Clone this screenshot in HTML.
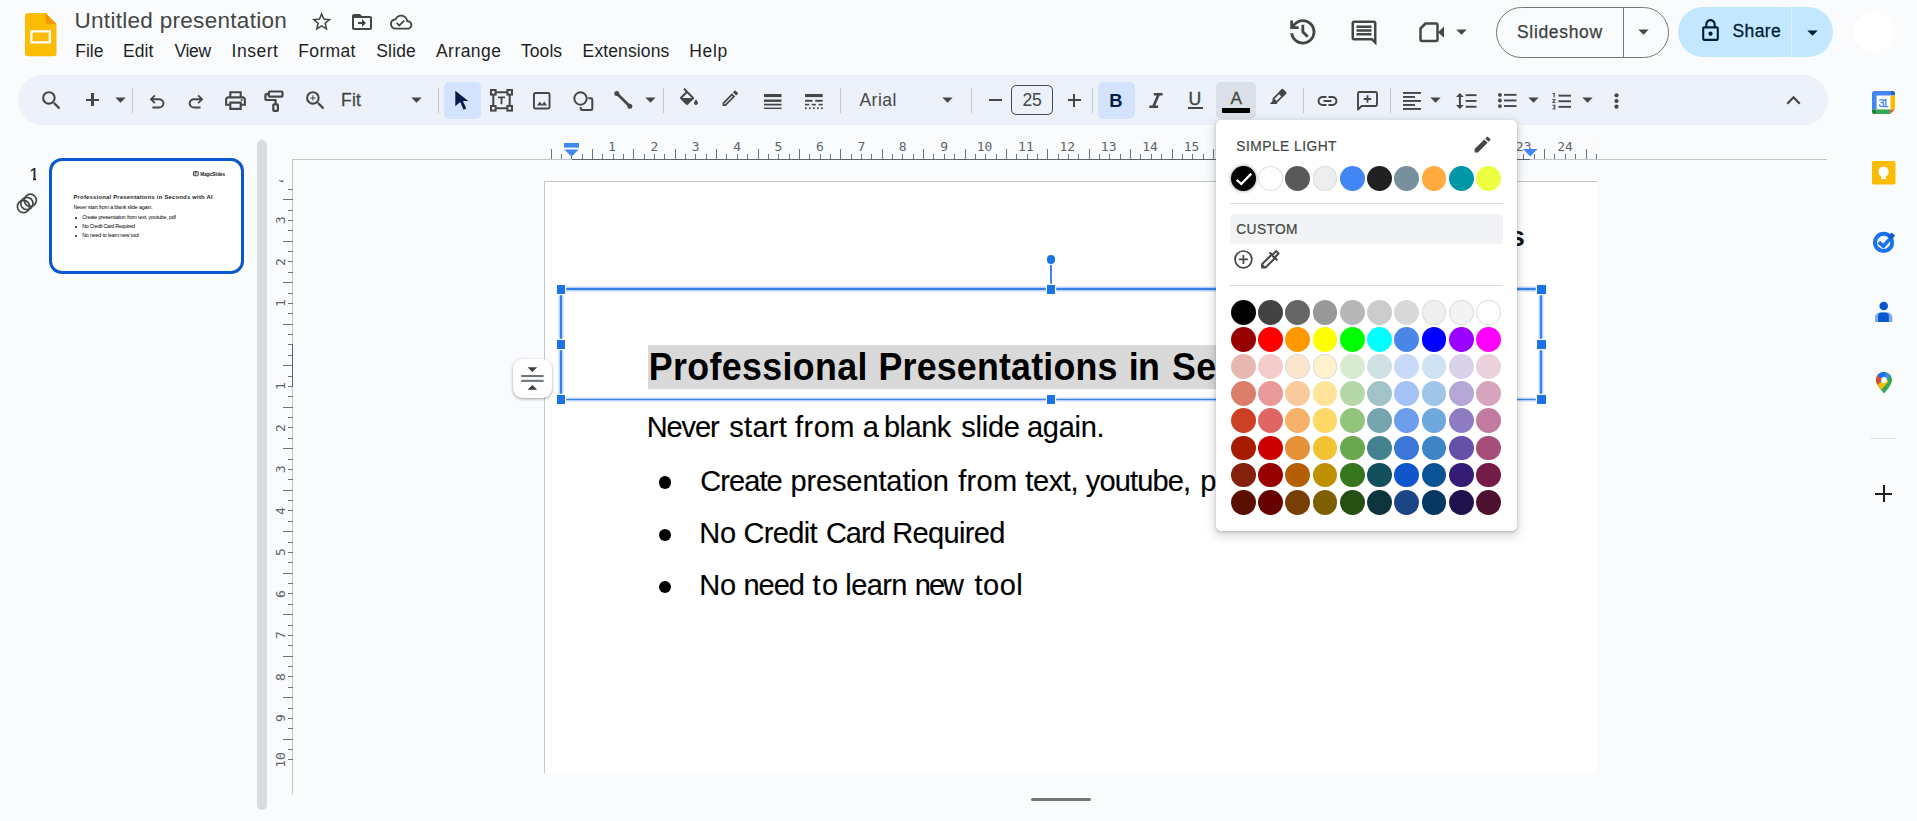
<!DOCTYPE html>
<html><head><meta charset="utf-8"><title>Untitled presentation - Google Slides</title>
<style>
html,body{margin:0;padding:0}
body{width:1917px;height:821px;position:relative;overflow:hidden;background:#f9fbfd;font-family:"Liberation Sans",sans-serif}
svg{display:block;overflow:visible}
</style></head><body>
<svg style="position:absolute;left:25px;top:13.3px" width="31.5" height="43.2" viewBox="0 0 31.5 43.2">
<path d="M3 0H20.5L31.5 11V40.2a3 3 0 0 1-3 3H3a3 3 0 0 1-3-3V3a3 3 0 0 1 3-3z" fill="#fbbc04"/>
<path d="M20.5 0L31.5 11H23.5a3 3 0 0 1-3-3z" fill="#f29900"/>
<path d="M5.3 17.2H26V30.5H5.3zM7.6 19.5V28.2H23.7V19.5z" fill="#fff" fill-rule="evenodd"/>
</svg>
<span style="position:absolute;left:74.50px;top:7.70px;white-space:pre;font-family:'Liberation Sans',sans-serif;font-size:22.5px;font-weight:400;font-style:normal;color:#444746;letter-spacing:0.297px;line-height:normal;">Untitled presentation</span>
<svg style="position:absolute;left:310px;top:9.75px" width="23.3" height="23.3" viewBox="0 0 24 24" fill="#444746" ><path d="M12 17.27 18.18 21l-1.64-7.03L22 9.24l-7.19-.61L12 2 9.19 8.63 2 9.24l5.46 4.73L5.82 21zM12 15.4l-3.76 2.27 1-4.28-3.32-2.88 4.38-.38L12 6.1l1.71 4.04 4.38.38-3.32 2.88 1 4.28z" fill-rule="evenodd"/></svg>
<svg style="position:absolute;left:349.6px;top:9.9px" width="24" height="24" viewBox="0 0 24 24" fill="#444746" ><path d="M20 6h-8l-2-2H4c-1.1 0-2 .9-2 2v12c0 1.1.9 2 2 2h16c1.1 0 2-.9 2-2V8c0-1.1-.9-2-2-2zm0 12H4V8h16v10zm-8.01-1L16 13l-4.010-4v3H8v2h3.990z" fill-rule="evenodd"/></svg>
<svg style="position:absolute;left:390px;top:10.5px" width="22.3" height="22.3" viewBox="0 0 24 24" fill="#444746" ><path d="M19.35 10.04C18.67 6.59 15.64 4 12 4 9.11 4 6.6 5.64 5.35 8.04 2.34 8.36 0 10.91 0 14c0 3.31 2.69 6 6 6h13c2.76 0 5-2.24 5-5 0-2.64-2.05-4.78-4.65-4.96zM19 18H6c-2.21 0-4-1.79-4-4 0-2.05 1.53-3.76 3.56-3.97l1.07-.11.5-.95C8.08 7.140 9.94 6 12 6c2.620 0 4.880 1.860 5.390 4.430l.3 1.5 1.530.11c1.560.1 2.780 1.410 2.780 2.960 0 1.650-1.350 3-3 3zm-9-3.820l-2.090-2.090L6.500 13.500 10 17l6.010-6.010-1.410-1.410z" fill-rule="evenodd"/></svg>
<span style="position:absolute;left:75.20px;top:40.80px;white-space:pre;font-family:'Liberation Sans',sans-serif;font-size:17.5px;font-weight:400;font-style:normal;color:#1f1f1f;letter-spacing:0.045px;line-height:normal;">File</span>
<span style="position:absolute;left:123.10px;top:40.80px;white-space:pre;font-family:'Liberation Sans',sans-serif;font-size:17.5px;font-weight:400;font-style:normal;color:#1f1f1f;letter-spacing:0.002px;line-height:normal;">Edit</span>
<span style="position:absolute;left:174.60px;top:40.80px;white-space:pre;font-family:'Liberation Sans',sans-serif;font-size:17.5px;font-weight:400;font-style:normal;color:#1f1f1f;letter-spacing:-0.359px;line-height:normal;">View</span>
<span style="position:absolute;left:231.60px;top:40.80px;white-space:pre;font-family:'Liberation Sans',sans-serif;font-size:17.5px;font-weight:400;font-style:normal;color:#1f1f1f;letter-spacing:0.499px;line-height:normal;">Insert</span>
<span style="position:absolute;left:298.30px;top:40.80px;white-space:pre;font-family:'Liberation Sans',sans-serif;font-size:17.5px;font-weight:400;font-style:normal;color:#1f1f1f;letter-spacing:0.348px;line-height:normal;">Format</span>
<span style="position:absolute;left:376.30px;top:40.80px;white-space:pre;font-family:'Liberation Sans',sans-serif;font-size:17.5px;font-weight:400;font-style:normal;color:#1f1f1f;letter-spacing:0.155px;line-height:normal;">Slide</span>
<span style="position:absolute;left:436.00px;top:40.80px;white-space:pre;font-family:'Liberation Sans',sans-serif;font-size:17.5px;font-weight:400;font-style:normal;color:#1f1f1f;letter-spacing:0.446px;line-height:normal;">Arrange</span>
<span style="position:absolute;left:521.10px;top:40.80px;white-space:pre;font-family:'Liberation Sans',sans-serif;font-size:17.5px;font-weight:400;font-style:normal;color:#1f1f1f;letter-spacing:0.024px;line-height:normal;">Tools</span>
<span style="position:absolute;left:582.60px;top:40.80px;white-space:pre;font-family:'Liberation Sans',sans-serif;font-size:17.5px;font-weight:400;font-style:normal;color:#1f1f1f;letter-spacing:0.127px;line-height:normal;">Extensions</span>
<span style="position:absolute;left:689.30px;top:40.80px;white-space:pre;font-family:'Liberation Sans',sans-serif;font-size:17.5px;font-weight:400;font-style:normal;color:#1f1f1f;letter-spacing:0.614px;line-height:normal;">Help</span>
<svg style="position:absolute;left:1285.8px;top:14.6px" width="33.7" height="33.7" viewBox="0 0 24 24" fill="#444746" ><path d="M12 21q-3.450 0-6.012-2.287T3.050 13H5.100q.350 2.600 2.313 4.300T12 19q2.925 0 4.963-2.037T19 12q0-2.925-2.037-4.963T12 5q-1.725 0-3.225.8T6.250 8H9v2H3V4h2v2.350q1.275-1.600 3.113-2.475T12 3q1.875 0 3.513.712t2.850 1.925q1.212 1.213 1.925 2.850T21 12q0 1.875-.712 3.513t-1.925 2.850q-1.213 1.212-2.850 1.925T12 21zm2.800-4.800L11 12.400V7h2v4.600l3.200 3.200z"/></svg>
<svg style="position:absolute;left:1349px;top:17.5px" width="30" height="30" viewBox="0 0 24 24" fill="#444746" ><path d="M21.990 4c0-1.100-.89-2-1.990-2H4c-1.100 0-2 .9-2 2v12c0 1.100.9 2 2 2h14l4 4-.01-18zM20 4v13.170L18.830 16H4V4h16zM6 12h12v2H6zm0-3h12v2H6zm0-3h12v2H6z" fill-rule="evenodd"/></svg>
<svg style="position:absolute;left:1419px;top:22px" width="26" height="21" viewBox="0 0 26 21" fill="none" stroke="#444746" stroke-width="2.5" stroke-linejoin="round"><path d="M6.500 1.500H17a1.500 1.500 0 0 1 1.500 1.500V17.500a1.500 1.500 0 0 1-1.500 1.500H3a1.500 1.500 0 0 1-1.500-1.500V6.500z"/><path d="M19 10.200 25 4.500V15.800z" fill="#444746" stroke="none"/></svg>
<svg style="position:absolute;left:1449.1px;top:18.8px" width="25" height="25" viewBox="0 0 24 24" fill="#444746" ><path d="M7 10l5 5 5-5z"/></svg>
<div style="position:absolute;left:1496px;top:7px;width:170.5px;height:48.5px;border:1px solid #747775;border-radius:26px;box-sizing:content-box"></div>
<div style="position:absolute;left:1623.3px;top:7.5px;width:1px;height:50px;background:#747775"></div>
<span style="position:absolute;left:1517.00px;top:22.30px;white-space:pre;font-family:'Liberation Sans',sans-serif;font-size:17.5px;font-weight:400;font-style:normal;color:#3c3f3e;letter-spacing:0.671px;line-height:normal;-webkit-text-stroke:0.25px #3c3f3e;">Slideshow</span>
<svg style="position:absolute;left:1631.4px;top:18.8px" width="25" height="25" viewBox="0 0 24 24" fill="#444746" ><path d="M7 10l5 5 5-5z"/></svg>
<div style="position:absolute;left:1678px;top:7px;width:155px;height:50px;background:#c2e7ff;border-radius:25px"></div>
<div style="position:absolute;left:1791.2px;top:7px;width:1.2px;height:50px;background:#e3f2fd"></div>
<svg style="position:absolute;left:1698px;top:17.800px" width="25" height="25" viewBox="0 0 24 24" fill="#001d35"><path d="M18 8h-1V6c0-2.760-2.240-5-5-5S7 3.240 7 6v2H6c-1.100 0-2 .9-2 2v10c0 1.100.9 2 2 2h12c1.100 0 2-.9 2-2V10c0-1.100-.9-2-2-2zM9 6c0-1.660 1.340-3 3-3s3 1.340 3 3v2H9V6zm9 14H6V10h12v10zm-6-3c1.100 0 2-.9 2-2s-.9-2-2-2-2 .9-2 2 .9 2 2 2z" fill-rule="evenodd"/></svg>
<span style="position:absolute;left:1732.50px;top:21.00px;white-space:pre;font-family:'Liberation Sans',sans-serif;font-size:17.5px;font-weight:400;font-style:normal;color:#001d35;letter-spacing:0.384px;line-height:normal;-webkit-text-stroke:0.3px #001d35;">Share</span>
<svg style="position:absolute;left:1799.5px;top:19.5px" width="25" height="25" viewBox="0 0 24 24" fill="#001d35" ><path d="M7 10l5 5 5-5z"/></svg>
<div style="position:absolute;left:1853px;top:12px;width:40px;height:40px;background:#fff;border-radius:50%"></div>
<div style="position:absolute;left:18px;top:75px;width:1810px;height:50px;background:#edf2fa;border-radius:25px"></div>
<svg style="position:absolute;left:38.6px;top:88.1px" width="25" height="25" viewBox="0 0 24 24" fill="#444746" ><path d="M15.5 14h-.79l-.28-.27A6.471 6.471 0 0 0 16 9.500 6.500 6.500 0 1 0 9.500 16c1.610 0 3.090-.59 4.230-1.570l.27.28v.79l5 4.990L20.490 19zm-6 0C7.010 14 5 11.990 5 9.500S7.010 5 9.500 5 14 7.010 14 9.500 11.990 14 9.500 14z"/></svg>
<div style="position:absolute;left:86.2px;top:98.55px;width:13px;height:2.5px;background:#444746"></div>
<div style="position:absolute;left:91.45px;top:93.3px;width:2.5px;height:13px;background:#444746"></div>
<svg style="position:absolute;left:107.5px;top:87.3px" width="25" height="25" viewBox="0 0 24 24" fill="#444746" ><path d="M7 10l5 5 5-5z"/></svg>
<div style="position:absolute;left:131.8px;top:88px;width:1px;height:25px;background:#c7c7c7"></div>
<svg style="position:absolute;left:145.7px;top:91.1px" width="22" height="22" viewBox="0 0 24 24" fill="#444746" ><path d="M7 19v-2h7.100q1.575 0 2.738-1T18 13.500q0-1.500-1.163-2.500T14.100 10H7.800l2.600 2.600L9 14 4 9l5-5 1.400 1.400L7.800 8h6.300q2.425 0 4.163 1.575T20 13.500q0 2.350-1.738 3.925T14.100 19z"/></svg>
<svg style="position:absolute;left:184.9px;top:91.1px" width="22" height="22" viewBox="0 0 24 24" fill="#444746" ><path d="M9.900 19q-2.425 0-4.163-1.575T4 13.500q0-2.350 1.737-3.925T9.900 8h6.300l-2.600-2.600L15 4l5 5-5 5-1.400-1.400 2.600-2.600H9.900q-1.575 0-2.738 1T6 13.500Q6 15 7.162 16T9.900 17H17v2z"/></svg>
<svg style="position:absolute;left:223px;top:88.3px" width="25" height="25" viewBox="0 0 24 24" fill="#444746" ><path d="M16 8V5H8v3H6V3h12v5zM18 12.500q.425 0 .712-.288T19 11.500q0-.425-.288-.712T18 10.500q-.425 0-.712.288T17 11.500q0 .425.288.712T18 12.500zM16 19v-4H8v4zm2 2H6v-4H2v-6q0-1.275.875-2.137T5 8h14q1.275 0 2.138.863T22 11v6h-4zm2-6v-4q0-.425-.288-.712T19 10H5q-.425 0-.712.288T4 11v4h2v-2h12v2z" fill-rule="evenodd"/></svg>
<svg style="position:absolute;left:263px;top:89px" width="22" height="25" viewBox="0 0 22 25" fill="none" stroke="#444746" stroke-width="2.200" stroke-linejoin="round"><rect x="5.800" y="2.500" width="13.700" height="5.200" rx="1"/><path d="M5.800 5.200H3.400a1 1 0 0 0-1 1V10a1 1 0 0 0 1 1H12.600V15"/><rect x="10.300" y="15.300" width="4.600" height="6.600" rx="0.800"/></svg>
<svg style="position:absolute;left:302.5px;top:88.3px" width="25" height="25" viewBox="0 0 24 24" fill="#444746" ><path d="M15.500 14h-.79l-.28-.27A6.471 6.471 0 0 0 16 9.500 6.500 6.500 0 1 0 9.500 16c1.610 0 3.090-.59 4.230-1.570l.27.28v.79l5 4.990L20.490 19zm-6 0C7.010 14 5 11.990 5 9.500S7.010 5 9.500 5 14 7.010 14 9.500 11.990 14 9.500 14zm.5-7H9v2H7v1h2v2h1v-2h2V9h-2z"/></svg>
<span style="position:absolute;left:341.00px;top:89.90px;white-space:pre;font-family:'Liberation Sans',sans-serif;font-size:17.5px;font-weight:400;font-style:normal;color:#444746;letter-spacing:0.211px;line-height:normal;-webkit-text-stroke:0.3px #444746;">Fit</span>
<svg style="position:absolute;left:403.5px;top:87.3px" width="25" height="25" viewBox="0 0 24 24" fill="#444746" ><path d="M7 10l5 5 5-5z"/></svg>
<div style="position:absolute;left:437.5px;top:88px;width:1px;height:25px;background:#c7c7c7"></div>
<div style="position:absolute;left:443.5px;top:82px;width:37.5px;height:37px;background:#d3e3fd;border-radius:5px"></div>
<svg style="position:absolute;left:454px;top:90px" width="16" height="22" viewBox="0 0 16 22" fill="#041e49"><path d="M1.300 0.800 14.300 10.900H8.900L12.300 18.600 9.600 19.800 6.200 12 1.300 16.200z"/></svg>
<svg style="position:absolute;left:490px;top:89.400px" width="23" height="22.600" viewBox="0 0 23 22.600" fill="none" stroke="#444746" stroke-width="2"><path d="M5.600 3.300H17.400M5.600 19.300H17.400M3.300 5.600V17M19.700 5.600V17"/><rect x="1" y="1" width="4.600" height="4.600"/><rect x="17.400" y="1" width="4.600" height="4.600"/><rect x="1" y="17" width="4.600" height="4.600"/><rect x="17.400" y="17" width="4.600" height="4.600"/><path d="M8 8.300H15M11.500 8.300V15.300" stroke-width="1.800"/></svg>
<svg style="position:absolute;left:532.500px;top:91.900px" width="17.500" height="17.500" viewBox="0 0 17.500 17.500" fill="none" stroke="#444746" stroke-width="1.900"><rect x="0.950" y="0.950" width="15.600" height="15.600" rx="1.500"/><path d="M3.800 13.600 6.900 9.800 9.100 12.400 11.300 9.600 14 13.600z" fill="#444746" stroke="none"/></svg>
<svg style="position:absolute;left:573px;top:90.600px" width="21" height="20.500" viewBox="0 0 21 20.500" fill="none" stroke="#444746" stroke-width="2"><circle cx="7.500" cy="7.500" r="6.200"/><path d="M15.300 7.300H17.800a1.500 1.500 0 0 1 1.500 1.500V17.500a1.500 1.500 0 0 1-1.500 1.500H9.300a1.500 1.500 0 0 1-1.500-1.500V16"/></svg>
<svg style="position:absolute;left:614px;top:91px" width="19" height="18" viewBox="0 0 19 18" fill="#444746" stroke="#444746"><path d="M2.800 2.600 15.800 15.200" stroke-width="2.800"/><circle cx="2.800" cy="2.600" r="2.500" stroke="none"/><circle cx="15.800" cy="15.200" r="2.500" stroke="none"/></svg>
<svg style="position:absolute;left:638.1px;top:87.3px" width="25" height="25" viewBox="0 0 24 24" fill="#444746" ><path d="M7 10l5 5 5-5z"/></svg>
<div style="position:absolute;left:662.7px;top:88px;width:1px;height:25px;background:#c7c7c7"></div>
<svg style="position:absolute;left:676.5px;top:88.2px" width="24" height="24" viewBox="0 0 24 24" fill="#444746" ><path d="M16.560 8.940 7.620 0 6.210 1.410l2.380 2.380-5.150 5.150a1.490 1.490 0 0 0 0 2.120l5.500 5.500c.29.29.68.44 1.060.44s.77-.15 1.060-.44l5.500-5.500c.59-.58.59-1.530 0-2.120zM5.210 10 10 5.210 14.790 10zM19 11.500s-2 2.170-2 3.500c0 1.100.9 2 2 2s2-.9 2-2c0-1.330-2-3.500-2-3.500z"/></svg>
<svg style="position:absolute;left:719.9px;top:88.4px" width="20.5" height="20.5" viewBox="0 0 24 24" fill="#444746" ><path d="M3 17.250V21h3.750L17.810 9.940l-3.750-3.750zM5.920 19H5v-.92l9.060-9.060.92.920zM20.710 5.630l-2.340-2.340a1 1 0 0 0-1.410 0l-1.830 1.830 3.750 3.750 1.830-1.830a1 1 0 0 0 0-1.410z" fill-rule="evenodd"/></svg>
<svg style="position:absolute;left:763.700px;top:93.500px" width="17.500" height="15.500" viewBox="0 0 17.500 15.500" fill="#444746"><rect x="0" y="0" width="17.500" height="3.100"/><rect x="0" y="5.500" width="17.500" height="2.400"/><rect x="0" y="9.700" width="17.500" height="1.800"/><rect x="0" y="13.600" width="17.500" height="1.400"/></svg>
<svg style="position:absolute;left:805px;top:93.500px" width="17.700" height="15.500" viewBox="0 0 17.700 15.500" fill="#444746"><rect x="0" y="0" width="17.700" height="3.100"/><rect x="0" y="5.800" width="7.500" height="1.900"/><rect x="10.200" y="5.800" width="7.500" height="1.900"/><rect x="0" y="9.800" width="4.200" height="1.600"/><rect x="6.700" y="9.800" width="4.200" height="1.600"/><rect x="13.500" y="9.800" width="4.200" height="1.600"/><rect x="0" y="13.400" width="1.700" height="1.700"/><rect x="4" y="13.400" width="1.700" height="1.700"/><rect x="8" y="13.400" width="1.700" height="1.700"/><rect x="12" y="13.400" width="1.700" height="1.700"/><rect x="16" y="13.400" width="1.700" height="1.700"/></svg>
<div style="position:absolute;left:839.7px;top:88px;width:1px;height:25px;background:#c7c7c7"></div>
<span style="position:absolute;left:859.40px;top:89.90px;white-space:pre;font-family:'Liberation Sans',sans-serif;font-size:17.5px;font-weight:400;font-style:normal;color:#444746;letter-spacing:0.520px;line-height:normal;">Arial</span>
<svg style="position:absolute;left:935.3px;top:86.5px" width="25" height="25" viewBox="0 0 24 24" fill="#444746" ><path d="M7 10l5 5 5-5z"/></svg>
<div style="position:absolute;left:970.9px;top:88px;width:1px;height:25px;background:#c7c7c7"></div>
<div style="position:absolute;left:988.5px;top:99.2px;width:13px;height:1.7px;background:#444746"></div>
<div style="position:absolute;left:1011px;top:85px;width:40px;height:28px;border:1px solid #444746;border-radius:5px;box-sizing:content-box"></div>
<span style="position:absolute;left:1022.50px;top:90.20px;white-space:pre;font-family:'Liberation Sans',sans-serif;font-size:17.5px;font-weight:400;font-style:normal;color:#444746;letter-spacing:-0.233px;line-height:normal;">25</span>
<div style="position:absolute;left:1067.7px;top:99.2px;width:13px;height:1.7px;background:#444746"></div>
<div style="position:absolute;left:1073.3px;top:93.6px;width:1.7px;height:13px;background:#444746"></div>
<div style="position:absolute;left:1091.8px;top:88px;width:1px;height:25px;background:#c7c7c7"></div>
<div style="position:absolute;left:1097.8px;top:82px;width:37px;height:37px;background:#d3e3fd;border-radius:5px"></div>
<span style="position:absolute;left:1109.20px;top:89.90px;white-space:pre;font-family:'Liberation Sans',sans-serif;font-size:18.3px;font-weight:700;font-style:normal;color:#041e49;letter-spacing:0.000px;line-height:normal;">B</span>
<svg style="position:absolute;left:1148.500px;top:92.800px" width="14" height="15" viewBox="0 0 14 15" fill="#444746"><path d="M4.800 0H13.600V2.500H10.600L6.300 12.500H9.100V15H0.300V12.500H3.400L7.700 2.500H4.800z"/></svg>
<span style="position:absolute;left:1188.40px;top:88.60px;white-space:pre;font-family:'Liberation Sans',sans-serif;font-size:17.6px;font-weight:400;font-style:normal;color:#444746;letter-spacing:0.000px;line-height:normal;-webkit-text-stroke:0.4px #444746;">U</span>
<div style="position:absolute;left:1188px;top:107.2px;width:14.8px;height:2px;background:#444746"></div>
<div style="position:absolute;left:1216px;top:82px;width:39.6px;height:37px;background:#dadfe8;border-radius:5px"></div>
<span style="position:absolute;left:1230.60px;top:87.90px;white-space:pre;font-family:'Liberation Sans',sans-serif;font-size:17.2px;font-weight:400;font-style:normal;color:#444746;letter-spacing:0.000px;line-height:normal;-webkit-text-stroke:0.3px #444746;">A</span>
<div style="position:absolute;left:1222px;top:107.9px;width:28px;height:5px;background:#000"></div>
<svg style="position:absolute;left:1255px;top:80px" width="90" height="40" viewBox="0 0 90 40"><g transform="translate(19.300,21.100) rotate(-45.100)"><rect x="0.850" y="-2.300" width="12.900" height="4.600" rx="0.400" fill="none" stroke="#444746" stroke-width="1.700"/><rect x="8.300" y="-3.150" width="6.400" height="6.300" rx="1.100" fill="#444746"/></g><path d="M14.800 24H21.500L22.300 23.200 17.400 19.200 17.400 21.300z" fill="#444746"/></svg>
<div style="position:absolute;left:1302.5px;top:88px;width:1px;height:25px;background:#c7c7c7"></div>
<svg style="position:absolute;left:1312px;top:85.5px" width="30" height="30" viewBox="0 0 24 24" fill="#444746" ><path d="M3.900 12c0-1.710 1.390-3.100 3.100-3.100h4V7H7c-2.760 0-5 2.240-5 5s2.240 5 5 5h4v-1.900H7c-1.710 0-3.100-1.390-3.100-3.100zM8 13h8v-2H8zm9-6h-4v1.900h4c1.710 0 3.100 1.390 3.100 3.100s-1.390 3.100-3.100 3.100h-4V17h4c2.760 0 5-2.240 5-5s-2.240-5-5-5z" transform="translate(12.400 12) scale(0.79) translate(-12 -12)"/></svg>
<svg style="position:absolute;left:1357px;top:90.700px" width="21" height="20" viewBox="0 0 21 20" fill="none" stroke="#444746" stroke-width="1.900" stroke-linejoin="round"><path d="M1 18.600V2.400a1.400 1.400 0 0 1 1.400-1.400H18.600a1.400 1.400 0 0 1 1.400 1.400V13.600a1.400 1.400 0 0 1-1.400 1.400H4.600z"/><path d="M10.500 4.300V11.700M6.800 8H14.200" stroke-width="1.800"/></svg>
<div style="position:absolute;left:1389.9px;top:88px;width:1px;height:25px;background:#c7c7c7"></div>
<svg style="position:absolute;left:1403.400px;top:92.200px" width="18" height="18" viewBox="0 0 18 18" fill="#444746"><rect y="0" width="18" height="1.900"/><rect y="4" width="12" height="1.900"/><rect y="8" width="18" height="1.900"/><rect y="12" width="12" height="1.900"/><rect y="16" width="18" height="1.900"/></svg>
<svg style="position:absolute;left:1422.5px;top:87.3px" width="25" height="25" viewBox="0 0 24 24" fill="#444746" ><path d="M7 10l5 5 5-5z"/></svg>
<svg style="position:absolute;left:1456px;top:93px" width="21" height="16" viewBox="0 0 21 16" fill="#444746"><rect x="9.700" y="1.200" width="10.800" height="1.900"/><rect x="9.700" y="7" width="10.800" height="1.900"/><rect x="9.700" y="12.800" width="10.800" height="1.900"/><path d="M3.900 0 7.800 4H4.900V12H7.800L3.900 16 0 12H2.900V4H0z"/></svg>
<svg style="position:absolute;left:1498.400px;top:93.200px" width="18.500" height="15" viewBox="0 0 18.500 15" fill="#444746"><circle cx="1.900" cy="1.900" r="1.900"/><circle cx="1.900" cy="7.500" r="1.900"/><circle cx="1.900" cy="13.100" r="1.900"/><rect x="6" y="0.900" width="12.500" height="1.900"/><rect x="6" y="6.500" width="12.500" height="1.900"/><rect x="6" y="12.100" width="12.500" height="1.900"/></svg>
<svg style="position:absolute;left:1520.8px;top:87.3px" width="25" height="25" viewBox="0 0 24 24" fill="#444746" ><path d="M7 10l5 5 5-5z"/></svg>
<svg style="position:absolute;left:1552px;top:92.500px" width="19" height="17" viewBox="0 0 19 17" fill="#444746"><rect x="6.500" y="1.700" width="12.500" height="1.900"/><rect x="6.500" y="7.300" width="12.500" height="1.900"/><rect x="6.500" y="12.900" width="12.500" height="1.900"/><path d="M0.600 0H2.700V4.600H1.600V1H0.600zM0.400 6H3.400V7L1.700 9H3.400V10H0.400V9L2.100 7H0.400zM0.400 11.800H3.400V16.400H0.400V15.400H2.300V14.600H1.200V13.700H2.300V12.800H0.400z"/></svg>
<svg style="position:absolute;left:1574.8px;top:87.3px" width="25" height="25" viewBox="0 0 24 24" fill="#444746" ><path d="M7 10l5 5 5-5z"/></svg>
<svg style="position:absolute;left:1613.700px;top:92.800px" width="5" height="16" viewBox="0 0 5 16" fill="#444746"><circle cx="2.500" cy="2.300" r="2.100"/><circle cx="2.500" cy="8" r="2.100"/><circle cx="2.500" cy="13.700" r="2.100"/></svg>
<svg style="position:absolute;left:1786px;top:95px" width="15" height="10" viewBox="0 0 15 10" fill="none" stroke="#444746" stroke-width="2.200"><path d="M1.300 8.700 7.500 2.300 13.700 8.700"/></svg>
<span style="position:absolute;left:29.40px;top:164.80px;white-space:pre;font-family:'Liberation Sans',sans-serif;font-size:16.6px;font-weight:400;font-style:normal;color:#1f1f1f;letter-spacing:0.000px;line-height:normal;-webkit-text-stroke:0.25px #1f1f1f;">1</span>
<div style="position:absolute;left:28.5px;top:178px;width:4.7px;height:2.6px;background:#f9fbfd"></div>
<div style="position:absolute;left:35.8px;top:178px;width:4px;height:2.6px;background:#f9fbfd"></div>
<svg style="position:absolute;left:16px;top:193px" width="22" height="21" viewBox="0 0 22 21" fill="none" stroke="#444746" stroke-width="1.700"><circle cx="14.300" cy="7.300" r="6.100"/><circle cx="10.900" cy="10.500" r="6.100"/><circle cx="7.500" cy="13.500" r="6.100"/></svg>
<div style="position:absolute;left:49px;top:158.3px;width:189.4px;height:109.4px;border:3px solid #0b57d0;border-radius:13px;background:#fff;box-sizing:content-box"></div>
<span style="position:absolute;left:200.30px;top:171.90px;white-space:pre;font-family:'Liberation Sans',sans-serif;font-size:4.6px;font-weight:700;font-style:normal;color:#222;letter-spacing:-0.190px;line-height:normal;">MagicSlides</span>
<svg style="position:absolute;left:192.700px;top:171.300px" width="5.700" height="5.200" viewBox="0 0 5.700 5.200" fill="none" stroke="#222" stroke-width="0.900"><rect x="0.450" y="0.450" width="4.800" height="4.300" rx="0.800"/><path d="M1.500 1.900H4.200M1.500 3.200H3"/></svg>
<span style="position:absolute;left:73.45px;top:194.10px;white-space:pre;font-family:'Liberation Sans',sans-serif;font-size:5.8px;font-weight:700;font-style:normal;color:#1a1a1a;letter-spacing:0.261px;line-height:normal;">Professional Presentations in Seconds with AI</span>
<span style="position:absolute;left:73.40px;top:204.00px;white-space:pre;font-family:'Liberation Sans',sans-serif;font-size:5.3px;font-weight:400;font-style:normal;color:#000;letter-spacing:-0.156px;line-height:normal;">Never start from a blank slide again.</span>
<div style="position:absolute;left:75.3px;top:216.5px;width:2.2px;height:2.2px;background:#111;border-radius:50%"></div>
<span style="position:absolute;left:82.20px;top:214.10px;white-space:pre;font-family:'Liberation Sans',sans-serif;font-size:5.3px;font-weight:400;font-style:normal;color:#000;letter-spacing:-0.165px;line-height:normal;">Create presentation from text, youtube, pdf</span>
<div style="position:absolute;left:75.3px;top:225.6px;width:2.2px;height:2.2px;background:#111;border-radius:50%"></div>
<span style="position:absolute;left:82.20px;top:223.20px;white-space:pre;font-family:'Liberation Sans',sans-serif;font-size:5.3px;font-weight:400;font-style:normal;color:#000;letter-spacing:-0.252px;line-height:normal;">No Credit Card Required</span>
<div style="position:absolute;left:75.3px;top:234.5px;width:2.2px;height:2.2px;background:#111;border-radius:50%"></div>
<span style="position:absolute;left:82.20px;top:232.10px;white-space:pre;font-family:'Liberation Sans',sans-serif;font-size:5.3px;font-weight:400;font-style:normal;color:#000;letter-spacing:-0.150px;line-height:normal;">No need to learn new tool</span>
<div style="position:absolute;left:257px;top:140px;width:10px;height:669.5px;background:#dadce0;border-radius:5px"></div>
<div style="position:absolute;left:292.3px;top:158.9px;width:1535.2px;height:1px;background:#c4c7c5"></div>
<div style="position:absolute;left:571.7px;top:158.9px;width:958.3px;height:1px;background:#5f6368"></div>
<div style="position:absolute;left:292px;top:159px;width:1px;height:634.8px;background:#c4c7c5"></div>
<div style="position:absolute;left:292px;top:344.5px;width:1px;height:42px;background:#5f6368"></div>
<svg style="position:absolute;left:0;top:0" width="1917" height="821" viewBox="0 0 1917 821" shape-rendering="crispEdges" stroke="#6f7478" stroke-width="1"><path d="M551.5 149V159M561.5 154V159M571.5 154V159M582.5 154V159M592.5 149V159M602.5 154V159M613.5 154V159M623.5 154V159M633.5 149V159M644.5 154V159M654.5 154V159M664.5 154V159M675.5 149V159M685.5 154V159M695.5 154V159M706.5 154V159M716.5 149V159M726.5 154V159M737.5 154V159M747.5 154V159M758.5 149V159M768.5 154V159M778.5 154V159M789.5 154V159M799.5 149V159M809.5 154V159M820.5 154V159M830.5 154V159M840.5 149V159M851.5 154V159M861.5 154V159M871.5 154V159M882.5 149V159M892.5 154V159M902.5 154V159M913.5 154V159M923.5 149V159M933.5 154V159M944.5 154V159M954.5 154V159M965.5 149V159M975.5 154V159M985.5 154V159M996.5 154V159M1006.5 149V159M1016.5 154V159M1027.5 154V159M1037.5 154V159M1047.5 149V159M1058.5 154V159M1068.5 154V159M1078.5 154V159M1089.5 149V159M1099.5 154V159M1109.5 154V159M1120.5 154V159M1130.5 149V159M1140.5 154V159M1151.5 154V159M1161.5 154V159M1172.5 149V159M1182.5 154V159M1192.5 154V159M1203.5 154V159M1213.5 149V159M1223.5 154V159M1234.5 154V159M1244.5 154V159M1254.5 149V159M1265.5 154V159M1275.5 154V159M1285.5 154V159M1296.5 149V159M1306.5 154V159M1316.5 154V159M1327.5 154V159M1337.5 149V159M1347.5 154V159M1358.5 154V159M1368.5 154V159M1379.5 149V159M1389.5 154V159M1399.5 154V159M1410.5 154V159M1420.5 149V159M1430.5 154V159M1441.5 154V159M1451.5 154V159M1461.5 149V159M1472.5 154V159M1482.5 154V159M1492.5 154V159M1503.5 149V159M1513.5 154V159M1523.5 154V159M1534.5 154V159M1544.5 149V159M1554.5 154V159M1565.5 154V159M1575.5 154V159M1586.5 149V159M1596.5 154V159M287.5 189.5H292.5M282.5 199.5H292.5M287.5 210.5H292.5M287.5 220.5H292.5M287.5 230.5H292.5M282.5 241.5H292.5M287.5 251.5H292.5M287.5 261.5H292.5M287.5 272.5H292.5M282.5 282.5H292.5M287.5 293.5H292.5M287.5 303.5H292.5M287.5 313.5H292.5M282.5 324.5H292.5M287.5 334.5H292.5M287.5 344.5H292.5M287.5 355.5H292.5M282.5 365.5H292.5M287.5 376.5H292.5M287.5 386.5H292.5M287.5 396.5H292.5M282.5 407.5H292.5M287.5 417.5H292.5M287.5 427.5H292.5M287.5 438.5H292.5M282.5 448.5H292.5M287.5 459.5H292.5M287.5 469.5H292.5M287.5 479.5H292.5M282.5 490.5H292.5M287.5 500.5H292.5M287.5 510.5H292.5M287.5 521.5H292.5M282.5 531.5H292.5M287.5 542.5H292.5M287.5 552.5H292.5M287.5 562.5H292.5M282.5 573.5H292.5M287.5 583.5H292.5M287.5 593.5H292.5M287.5 604.5H292.5M282.5 614.5H292.5M287.5 625.5H292.5M287.5 635.5H292.5M287.5 645.5H292.5M282.5 656.5H292.5M287.5 666.5H292.5M287.5 676.5H292.5M287.5 687.5H292.5M282.5 697.5H292.5M287.5 708.5H292.5M287.5 718.5H292.5M287.5 728.5H292.5M282.5 739.5H292.5M287.5 749.5H292.5M287.5 759.5H292.5"/></svg>
<span style="position:absolute;left:607.99px;top:138.80px;white-space:pre;font-family:'DejaVu Sans Mono','Liberation Mono',monospace;font-size:13px;font-weight:400;font-style:normal;color:#5f6368;letter-spacing:0.000px;line-height:normal;">1</span>
<span style="position:absolute;left:650.38px;top:138.80px;white-space:pre;font-family:'DejaVu Sans Mono','Liberation Mono',monospace;font-size:13px;font-weight:400;font-style:normal;color:#5f6368;letter-spacing:0.000px;line-height:normal;">2</span>
<span style="position:absolute;left:691.79px;top:138.80px;white-space:pre;font-family:'DejaVu Sans Mono','Liberation Mono',monospace;font-size:13px;font-weight:400;font-style:normal;color:#5f6368;letter-spacing:0.000px;line-height:normal;">3</span>
<span style="position:absolute;left:733.19px;top:138.80px;white-space:pre;font-family:'DejaVu Sans Mono','Liberation Mono',monospace;font-size:13px;font-weight:400;font-style:normal;color:#5f6368;letter-spacing:0.000px;line-height:normal;">4</span>
<span style="position:absolute;left:774.59px;top:138.80px;white-space:pre;font-family:'DejaVu Sans Mono','Liberation Mono',monospace;font-size:13px;font-weight:400;font-style:normal;color:#5f6368;letter-spacing:0.000px;line-height:normal;">5</span>
<span style="position:absolute;left:815.99px;top:138.80px;white-space:pre;font-family:'DejaVu Sans Mono','Liberation Mono',monospace;font-size:13px;font-weight:400;font-style:normal;color:#5f6368;letter-spacing:0.000px;line-height:normal;">6</span>
<span style="position:absolute;left:857.38px;top:138.80px;white-space:pre;font-family:'DejaVu Sans Mono','Liberation Mono',monospace;font-size:13px;font-weight:400;font-style:normal;color:#5f6368;letter-spacing:0.000px;line-height:normal;">7</span>
<span style="position:absolute;left:898.79px;top:138.80px;white-space:pre;font-family:'DejaVu Sans Mono','Liberation Mono',monospace;font-size:13px;font-weight:400;font-style:normal;color:#5f6368;letter-spacing:0.000px;line-height:normal;">8</span>
<span style="position:absolute;left:940.18px;top:138.80px;white-space:pre;font-family:'DejaVu Sans Mono','Liberation Mono',monospace;font-size:13px;font-weight:400;font-style:normal;color:#5f6368;letter-spacing:0.000px;line-height:normal;">9</span>
<span style="position:absolute;left:976.67px;top:138.80px;white-space:pre;font-family:'DejaVu Sans Mono','Liberation Mono',monospace;font-size:13px;font-weight:400;font-style:normal;color:#5f6368;letter-spacing:0.000px;line-height:normal;">10</span>
<span style="position:absolute;left:1018.07px;top:138.80px;white-space:pre;font-family:'DejaVu Sans Mono','Liberation Mono',monospace;font-size:13px;font-weight:400;font-style:normal;color:#5f6368;letter-spacing:0.000px;line-height:normal;">11</span>
<span style="position:absolute;left:1059.47px;top:138.80px;white-space:pre;font-family:'DejaVu Sans Mono','Liberation Mono',monospace;font-size:13px;font-weight:400;font-style:normal;color:#5f6368;letter-spacing:0.000px;line-height:normal;">12</span>
<span style="position:absolute;left:1100.87px;top:138.80px;white-space:pre;font-family:'DejaVu Sans Mono','Liberation Mono',monospace;font-size:13px;font-weight:400;font-style:normal;color:#5f6368;letter-spacing:0.000px;line-height:normal;">13</span>
<span style="position:absolute;left:1142.27px;top:138.80px;white-space:pre;font-family:'DejaVu Sans Mono','Liberation Mono',monospace;font-size:13px;font-weight:400;font-style:normal;color:#5f6368;letter-spacing:0.000px;line-height:normal;">14</span>
<span style="position:absolute;left:1183.67px;top:138.80px;white-space:pre;font-family:'DejaVu Sans Mono','Liberation Mono',monospace;font-size:13px;font-weight:400;font-style:normal;color:#5f6368;letter-spacing:0.000px;line-height:normal;">15</span>
<span style="position:absolute;left:1515.87px;top:138.80px;white-space:pre;font-family:'DejaVu Sans Mono','Liberation Mono',monospace;font-size:13px;font-weight:400;font-style:normal;color:#5f6368;letter-spacing:0.000px;line-height:normal;">23</span>
<span style="position:absolute;left:1557.27px;top:138.80px;white-space:pre;font-family:'DejaVu Sans Mono','Liberation Mono',monospace;font-size:13px;font-weight:400;font-style:normal;color:#5f6368;letter-spacing:0.000px;line-height:normal;">24</span>
<div style="position:absolute;left:1597px;top:138px;width:2.500px;height:16px;overflow:hidden"><span style="position:absolute;left:2px;top:0.500px;font-family:'DejaVu Sans Mono','Liberation Mono',monospace;font-size:13px;color:#c9925a;line-height:normal">25</span></div>
<span style="position:absolute;left:280px;top:303.15px;width:0;height:0"><span style="position:absolute;left:0;top:0;transform:translate(-50%,-50%) rotate(-90deg);white-space:pre;font-family:'DejaVu Sans Mono','Liberation Mono',monospace;font-size:13px;color:#5f6368;line-height:1">1</span></span>
<span style="position:absolute;left:280px;top:261.65px;width:0;height:0"><span style="position:absolute;left:0;top:0;transform:translate(-50%,-50%) rotate(-90deg);white-space:pre;font-family:'DejaVu Sans Mono','Liberation Mono',monospace;font-size:13px;color:#5f6368;line-height:1">2</span></span>
<span style="position:absolute;left:280px;top:220.15px;width:0;height:0"><span style="position:absolute;left:0;top:0;transform:translate(-50%,-50%) rotate(-90deg);white-space:pre;font-family:'DejaVu Sans Mono','Liberation Mono',monospace;font-size:13px;color:#5f6368;line-height:1">3</span></span>
<span style="position:absolute;left:280px;top:386.15px;width:0;height:0"><span style="position:absolute;left:0;top:0;transform:translate(-50%,-50%) rotate(-90deg);white-space:pre;font-family:'DejaVu Sans Mono','Liberation Mono',monospace;font-size:13px;color:#5f6368;line-height:1">1</span></span>
<span style="position:absolute;left:280px;top:427.65px;width:0;height:0"><span style="position:absolute;left:0;top:0;transform:translate(-50%,-50%) rotate(-90deg);white-space:pre;font-family:'DejaVu Sans Mono','Liberation Mono',monospace;font-size:13px;color:#5f6368;line-height:1">2</span></span>
<span style="position:absolute;left:280px;top:469.15px;width:0;height:0"><span style="position:absolute;left:0;top:0;transform:translate(-50%,-50%) rotate(-90deg);white-space:pre;font-family:'DejaVu Sans Mono','Liberation Mono',monospace;font-size:13px;color:#5f6368;line-height:1">3</span></span>
<span style="position:absolute;left:280px;top:510.65px;width:0;height:0"><span style="position:absolute;left:0;top:0;transform:translate(-50%,-50%) rotate(-90deg);white-space:pre;font-family:'DejaVu Sans Mono','Liberation Mono',monospace;font-size:13px;color:#5f6368;line-height:1">4</span></span>
<span style="position:absolute;left:280px;top:552.15px;width:0;height:0"><span style="position:absolute;left:0;top:0;transform:translate(-50%,-50%) rotate(-90deg);white-space:pre;font-family:'DejaVu Sans Mono','Liberation Mono',monospace;font-size:13px;color:#5f6368;line-height:1">5</span></span>
<span style="position:absolute;left:280px;top:593.65px;width:0;height:0"><span style="position:absolute;left:0;top:0;transform:translate(-50%,-50%) rotate(-90deg);white-space:pre;font-family:'DejaVu Sans Mono','Liberation Mono',monospace;font-size:13px;color:#5f6368;line-height:1">6</span></span>
<span style="position:absolute;left:280px;top:635.15px;width:0;height:0"><span style="position:absolute;left:0;top:0;transform:translate(-50%,-50%) rotate(-90deg);white-space:pre;font-family:'DejaVu Sans Mono','Liberation Mono',monospace;font-size:13px;color:#5f6368;line-height:1">7</span></span>
<span style="position:absolute;left:280px;top:676.65px;width:0;height:0"><span style="position:absolute;left:0;top:0;transform:translate(-50%,-50%) rotate(-90deg);white-space:pre;font-family:'DejaVu Sans Mono','Liberation Mono',monospace;font-size:13px;color:#5f6368;line-height:1">8</span></span>
<span style="position:absolute;left:280px;top:718.15px;width:0;height:0"><span style="position:absolute;left:0;top:0;transform:translate(-50%,-50%) rotate(-90deg);white-space:pre;font-family:'DejaVu Sans Mono','Liberation Mono',monospace;font-size:13px;color:#5f6368;line-height:1">9</span></span>
<span style="position:absolute;left:280px;top:759.65px;width:0;height:0"><span style="position:absolute;left:0;top:0;transform:translate(-50%,-50%) rotate(-90deg);white-space:pre;font-family:'DejaVu Sans Mono','Liberation Mono',monospace;font-size:13px;color:#5f6368;line-height:1">10</span></span>
<div style="position:absolute;left:270px;top:179.500px;width:20px;height:9px;overflow:hidden"><span style="position:absolute;left:10px;top:-0.55px;width:0;height:0"><span style="position:absolute;left:0;top:0;transform:translate(-50%,-50%) rotate(-90deg);white-space:pre;font-family:'DejaVu Sans Mono','Liberation Mono',monospace;font-size:13px;color:#5f6368;line-height:1">4</span></span></div>
<svg style="position:absolute;left:564px;top:143px" width="16" height="14" viewBox="0 0 16 14" fill="#4285f4"><rect x="0" y="0" width="15" height="4.600"/><path d="M0.300 6.500H14.700L7.500 13.500z"/></svg>
<svg style="position:absolute;left:1523px;top:149px" width="15" height="8" viewBox="0 0 15 8" fill="#4285f4"><path d="M0 0H14.500L7.250 7.500z"/></svg>
<div style="position:absolute;left:544px;top:181px;width:1053px;height:592px;background:#fff;border:1px solid #c4c7c5;border-bottom:none;border-right:none;box-sizing:border-box"></div>
<span style="position:absolute;right:392.300px;top:221.800px;white-space:pre;font-size:27px;font-weight:700;color:#111;line-height:normal">MagicSlides</span>
<div style="position:absolute;left:648px;top:345px;width:800px;height:43.5px;background:#d9d9d9"></div>
<span style="position:absolute;left:648.80px;top:348.20px;white-space:pre;font-family:'Liberation Sans',sans-serif;font-size:35.8px;font-weight:700;font-style:normal;color:#000;letter-spacing:0.336px;line-height:normal;transform:scaleY(1.06);transform-origin:0 32px;">Professional</span>
<span style="position:absolute;left:878.50px;top:348.20px;white-space:pre;font-family:'Liberation Sans',sans-serif;font-size:35.8px;font-weight:700;font-style:normal;color:#000;letter-spacing:0.181px;line-height:normal;transform:scaleY(1.06);transform-origin:0 32px;">Presentations</span>
<span style="position:absolute;left:1128.80px;top:348.20px;white-space:pre;font-family:'Liberation Sans',sans-serif;font-size:35.8px;font-weight:700;font-style:normal;color:#000;letter-spacing:-0.746px;line-height:normal;transform:scaleY(1.06);transform-origin:0 32px;">in</span>
<span style="position:absolute;left:1172.00px;top:348.20px;white-space:pre;font-family:'Liberation Sans',sans-serif;font-size:35.8px;font-weight:700;font-style:normal;color:#000;letter-spacing:0.285px;line-height:normal;transform:scaleY(1.06);transform-origin:0 32px;">Seconds</span>
<span style="position:absolute;left:1338.00px;top:348.20px;white-space:pre;font-family:'Liberation Sans',sans-serif;font-size:35.8px;font-weight:700;font-style:normal;color:#000;letter-spacing:0.097px;line-height:normal;transform:scaleY(1.06);transform-origin:0 32px;">with</span>
<span style="position:absolute;left:1423.00px;top:348.20px;white-space:pre;font-family:'Liberation Sans',sans-serif;font-size:35.8px;font-weight:700;font-style:normal;color:#000;letter-spacing:-3.851px;line-height:normal;transform:scaleY(1.06);transform-origin:0 32px;">AI</span>
<span style="position:absolute;left:646.80px;top:411.00px;white-space:pre;font-family:'Liberation Sans',sans-serif;font-size:29px;font-weight:400;font-style:normal;color:#000;letter-spacing:-1.125px;line-height:normal;-webkit-text-stroke:0.15px #000;">Never</span>
<span style="position:absolute;left:729.30px;top:411.00px;white-space:pre;font-family:'Liberation Sans',sans-serif;font-size:29px;font-weight:400;font-style:normal;color:#000;letter-spacing:0.289px;line-height:normal;-webkit-text-stroke:0.15px #000;">start</span>
<span style="position:absolute;left:795.00px;top:411.00px;white-space:pre;font-family:'Liberation Sans',sans-serif;font-size:29px;font-weight:400;font-style:normal;color:#000;letter-spacing:0.486px;line-height:normal;-webkit-text-stroke:0.15px #000;">from</span>
<span style="position:absolute;left:862.80px;top:411.00px;white-space:pre;font-family:'Liberation Sans',sans-serif;font-size:29px;font-weight:400;font-style:normal;color:#000;letter-spacing:0.000px;line-height:normal;-webkit-text-stroke:0.15px #000;">a</span>
<span style="position:absolute;left:884.00px;top:411.00px;white-space:pre;font-family:'Liberation Sans',sans-serif;font-size:29px;font-weight:400;font-style:normal;color:#000;letter-spacing:-0.507px;line-height:normal;-webkit-text-stroke:0.15px #000;">blank</span>
<span style="position:absolute;left:961.30px;top:411.00px;white-space:pre;font-family:'Liberation Sans',sans-serif;font-size:29px;font-weight:400;font-style:normal;color:#000;letter-spacing:-0.254px;line-height:normal;-webkit-text-stroke:0.15px #000;">slide</span>
<span style="position:absolute;left:1027.00px;top:411.00px;white-space:pre;font-family:'Liberation Sans',sans-serif;font-size:29px;font-weight:400;font-style:normal;color:#000;letter-spacing:-0.291px;line-height:normal;-webkit-text-stroke:0.15px #000;">again.</span>
<div style="position:absolute;left:658.8px;top:476.3px;width:12.4px;height:12.4px;background:#000;border-radius:50%"></div>
<span style="position:absolute;left:700.30px;top:464.50px;white-space:pre;font-family:'Liberation Sans',sans-serif;font-size:29px;font-weight:400;font-style:normal;color:#000;letter-spacing:-0.943px;line-height:normal;-webkit-text-stroke:0.15px #000;">Create</span>
<span style="position:absolute;left:790.40px;top:464.50px;white-space:pre;font-family:'Liberation Sans',sans-serif;font-size:29px;font-weight:400;font-style:normal;color:#000;letter-spacing:-0.108px;line-height:normal;-webkit-text-stroke:0.15px #000;">presentation</span>
<span style="position:absolute;left:958.20px;top:464.50px;white-space:pre;font-family:'Liberation Sans',sans-serif;font-size:29px;font-weight:400;font-style:normal;color:#000;letter-spacing:0.319px;line-height:normal;-webkit-text-stroke:0.15px #000;">from</span>
<span style="position:absolute;left:1025.20px;top:464.50px;white-space:pre;font-family:'Liberation Sans',sans-serif;font-size:29px;font-weight:400;font-style:normal;color:#000;letter-spacing:-0.361px;line-height:normal;-webkit-text-stroke:0.15px #000;">text,</span>
<span style="position:absolute;left:1085.80px;top:464.50px;white-space:pre;font-family:'Liberation Sans',sans-serif;font-size:29px;font-weight:400;font-style:normal;color:#000;letter-spacing:-0.857px;line-height:normal;-webkit-text-stroke:0.15px #000;">youtube,</span>
<span style="position:absolute;left:1200.30px;top:464.50px;white-space:pre;font-family:'Liberation Sans',sans-serif;font-size:29px;font-weight:400;font-style:normal;color:#000;letter-spacing:-0.778px;line-height:normal;-webkit-text-stroke:0.15px #000;">pdf</span>
<div style="position:absolute;left:658.8px;top:528.5px;width:12.4px;height:12.4px;background:#000;border-radius:50%"></div>
<span style="position:absolute;left:699.30px;top:516.70px;white-space:pre;font-family:'Liberation Sans',sans-serif;font-size:29px;font-weight:400;font-style:normal;color:#000;letter-spacing:-0.243px;line-height:normal;-webkit-text-stroke:0.15px #000;">No</span>
<span style="position:absolute;left:743.50px;top:516.70px;white-space:pre;font-family:'Liberation Sans',sans-serif;font-size:29px;font-weight:400;font-style:normal;color:#000;letter-spacing:-0.660px;line-height:normal;-webkit-text-stroke:0.15px #000;">Credit</span>
<span style="position:absolute;left:826.00px;top:516.70px;white-space:pre;font-family:'Liberation Sans',sans-serif;font-size:29px;font-weight:400;font-style:normal;color:#000;letter-spacing:-1.076px;line-height:normal;-webkit-text-stroke:0.15px #000;">Card</span>
<span style="position:absolute;left:892.30px;top:516.70px;white-space:pre;font-family:'Liberation Sans',sans-serif;font-size:29px;font-weight:400;font-style:normal;color:#000;letter-spacing:-0.651px;line-height:normal;-webkit-text-stroke:0.15px #000;">Required</span>
<div style="position:absolute;left:658.8px;top:580.8px;width:12.4px;height:12.4px;background:#000;border-radius:50%"></div>
<span style="position:absolute;left:699.30px;top:569.00px;white-space:pre;font-family:'Liberation Sans',sans-serif;font-size:29px;font-weight:400;font-style:normal;color:#000;letter-spacing:-0.243px;line-height:normal;-webkit-text-stroke:0.15px #000;">No</span>
<span style="position:absolute;left:743.50px;top:569.00px;white-space:pre;font-family:'Liberation Sans',sans-serif;font-size:29px;font-weight:400;font-style:normal;color:#000;letter-spacing:-1.028px;line-height:normal;-webkit-text-stroke:0.15px #000;">need</span>
<span style="position:absolute;left:812.50px;top:569.00px;white-space:pre;font-family:'Liberation Sans',sans-serif;font-size:29px;font-weight:400;font-style:normal;color:#000;letter-spacing:1.443px;line-height:normal;-webkit-text-stroke:0.15px #000;">to</span>
<span style="position:absolute;left:845.30px;top:569.00px;white-space:pre;font-family:'Liberation Sans',sans-serif;font-size:29px;font-weight:400;font-style:normal;color:#000;letter-spacing:-0.589px;line-height:normal;-webkit-text-stroke:0.15px #000;">learn</span>
<span style="position:absolute;left:914.80px;top:569.00px;white-space:pre;font-family:'Liberation Sans',sans-serif;font-size:29px;font-weight:400;font-style:normal;color:#000;letter-spacing:-2.028px;line-height:normal;-webkit-text-stroke:0.15px #000;">new</span>
<span style="position:absolute;left:974.50px;top:569.00px;white-space:pre;font-family:'Liberation Sans',sans-serif;font-size:29px;font-weight:400;font-style:normal;color:#000;letter-spacing:0.495px;line-height:normal;-webkit-text-stroke:0.15px #000;">tool</span>
<div style="position:absolute;left:561.2px;top:288.4px;width:980px;height:1.7px;background:#3580ec;box-shadow:0 0 0 1.400px rgba(66,133,244,.36);"></div>
<div style="position:absolute;left:561.2px;top:398.6px;width:980px;height:1.7px;background:#3580ec;box-shadow:0 0 0 1.400px rgba(66,133,244,.36);"></div>
<div style="position:absolute;left:560.2px;top:289.3px;width:1.9px;height:110px;background:#3580ec;box-shadow:0 0 0 1.400px rgba(66,133,244,.36);"></div>
<div style="position:absolute;left:1540.4px;top:289.3px;width:1.9px;height:110px;background:#3580ec;box-shadow:0 0 0 1.400px rgba(66,133,244,.36);"></div>
<div style="position:absolute;left:1050.4px;top:263px;width:1.5px;height:26px;background:#4285f4"></div>
<div style="position:absolute;left:1046.85px;top:255.15px;width:8.5px;height:8.5px;background:#1a73e8;border-radius:50%;box-shadow:0 0 0 1px #fff"></div>
<div style="position:absolute;left:556.9000000000001px;top:285.09999999999997px;width:8.6px;height:8.6px;background:#1a73e8;box-shadow:0 0 0 1.200px #fff"></div>
<div style="position:absolute;left:556.9000000000001px;top:340.09999999999997px;width:8.6px;height:8.6px;background:#1a73e8;box-shadow:0 0 0 1.200px #fff"></div>
<div style="position:absolute;left:556.9000000000001px;top:395.2px;width:8.6px;height:8.6px;background:#1a73e8;box-shadow:0 0 0 1.200px #fff"></div>
<div style="position:absolute;left:1046.9px;top:285.09999999999997px;width:8.6px;height:8.6px;background:#1a73e8;box-shadow:0 0 0 1.200px #fff"></div>
<div style="position:absolute;left:1046.9px;top:395.2px;width:8.6px;height:8.6px;background:#1a73e8;box-shadow:0 0 0 1.200px #fff"></div>
<div style="position:absolute;left:1537.1000000000001px;top:285.09999999999997px;width:8.6px;height:8.6px;background:#1a73e8;box-shadow:0 0 0 1.200px #fff"></div>
<div style="position:absolute;left:1537.1000000000001px;top:340.09999999999997px;width:8.6px;height:8.6px;background:#1a73e8;box-shadow:0 0 0 1.200px #fff"></div>
<div style="position:absolute;left:1537.1000000000001px;top:395.2px;width:8.6px;height:8.6px;background:#1a73e8;box-shadow:0 0 0 1.200px #fff"></div>
<div style="position:absolute;left:513px;top:358.9px;width:39.1px;height:39.1px;background:#fff;border-radius:9.500px;box-shadow:0 1px 3px 1px rgba(60,64,67,.16),0 1px 2px rgba(60,64,67,.3)"></div>
<svg style="position:absolute;left:521px;top:367px" width="23" height="23" viewBox="0 0 23 23"><rect x="0.100" y="8" width="22.500" height="2.100" fill="#70757a"/><rect x="0.100" y="12.800" width="22.500" height="2.100" fill="#70757a"/><path d="M6.500 0.200H16.200L11.350 4.900zM6.500 22.800H16.200L11.350 18z" fill="#3c4043"/></svg>
<div style="position:absolute;left:1031px;top:798px;width:60px;height:3px;background:#747775;border-radius:1.500px"></div>
<div style="position:absolute;left:1216px;top:119.5px;width:301px;height:411.5px;background:#fff;border-radius:5px;box-shadow:0 4px 8px 3px rgba(60,64,67,.15),0 1px 3px rgba(60,64,67,.3)"></div>
<span style="position:absolute;left:1236.30px;top:139.10px;white-space:pre;font-family:'Liberation Sans',sans-serif;font-size:13.75px;font-weight:400;font-style:normal;color:#444746;letter-spacing:0.496px;line-height:normal;-webkit-text-stroke:0.2px #444746;">SIMPLE LIGHT</span>
<svg style="position:absolute;left:1471.5px;top:133.6px" width="21" height="21" viewBox="0 0 24 24" fill="#444746" ><path d="M3 17.250V21h3.750L17.810 9.940l-3.750-3.750zM20.710 7.040a1 1 0 0 0 0-1.410l-2.340-2.340a1 1 0 0 0-1.410 0l-1.830 1.830 3.750 3.750z"/></svg>
<div style="position:absolute;left:1230.8999999999999px;top:165.9px;width:24.8px;height:24.8px;background:#000;border-radius:50%;box-shadow:0 0 3px 1px rgba(60,64,67,.35)"></div>
<div style="position:absolute;left:1258.1299999999999px;top:165.9px;width:24.8px;height:24.8px;background:#ffffff;border-radius:50%;box-shadow:inset 0 0 0 1px #dadce0;"></div>
<div style="position:absolute;left:1285.36px;top:165.9px;width:24.8px;height:24.8px;background:#595959;border-radius:50%;"></div>
<div style="position:absolute;left:1312.59px;top:165.9px;width:24.8px;height:24.8px;background:#eeeeee;border-radius:50%;box-shadow:inset 0 0 0 1px #dadce0;"></div>
<div style="position:absolute;left:1339.82px;top:165.9px;width:24.8px;height:24.8px;background:#4285f4;border-radius:50%;"></div>
<div style="position:absolute;left:1367.05px;top:165.9px;width:24.8px;height:24.8px;background:#212121;border-radius:50%;"></div>
<div style="position:absolute;left:1394.2799999999997px;top:165.9px;width:24.8px;height:24.8px;background:#78909c;border-radius:50%;"></div>
<div style="position:absolute;left:1421.5099999999998px;top:165.9px;width:24.8px;height:24.8px;background:#ffab40;border-radius:50%;"></div>
<div style="position:absolute;left:1448.7399999999998px;top:165.9px;width:24.8px;height:24.8px;background:#0097a7;border-radius:50%;"></div>
<div style="position:absolute;left:1475.9699999999998px;top:165.9px;width:24.8px;height:24.8px;background:#eeff41;border-radius:50%;"></div>
<svg style="position:absolute;left:1234.500px;top:171.500px" width="18" height="14" viewBox="0 0 18 14" fill="none" stroke="#fff" stroke-width="2.300"><path d="M1.700 7.800 6.300 12 16.300 1.600"/></svg>
<div style="position:absolute;left:1230.2px;top:203px;width:272.8px;height:1px;background:#dadce0"></div>
<div style="position:absolute;left:1230.2px;top:214.2px;width:272.8px;height:29.6px;background:#f1f3f4;border-radius:4px"></div>
<span style="position:absolute;left:1236.30px;top:222.00px;white-space:pre;font-family:'Liberation Sans',sans-serif;font-size:13.75px;font-weight:400;font-style:normal;color:#444746;letter-spacing:0.365px;line-height:normal;-webkit-text-stroke:0.2px #444746;">CUSTOM</span>
<svg style="position:absolute;left:1234px;top:249.800px" width="18.800" height="18.800" viewBox="0 0 18.800 18.800" fill="none" stroke="#444746" stroke-width="1.700"><circle cx="9.400" cy="9.400" r="8.400"/><path d="M9.400 4.900V13.900M4.900 9.400H13.900"/></svg>
<svg style="position:absolute;left:1257.9px;top:247.3px" width="24.7" height="24.7" viewBox="0 0 24 24" fill="#444746" ><path d="M17.660 5.410l.92.92-2.690 2.690-.92-.92 2.690-2.690M17.670 3c-.26 0-.51.1-.71.290l-3.120 3.120-1.930-1.910-1.410 1.410 1.420 1.420L3 16.250V21h4.750l8.920-8.920 1.420 1.420 1.410-1.410-1.920-1.920 3.120-3.120c.4-.4.4-1.030.01-1.420l-2.340-2.340c-.2-.19-.45-.29-.7-.29zM6.920 19 5 17.080l8.060-8.060 1.920 1.920z" fill-rule="evenodd"/></svg>
<div style="position:absolute;left:1230.2px;top:285px;width:272.8px;height:1px;background:#dadce0"></div>
<div style="position:absolute;left:1230.8999999999999px;top:299.90000000000003px;width:24.8px;height:24.8px;background:#000000;border-radius:50%;"></div>
<div style="position:absolute;left:1258.1299999999999px;top:299.90000000000003px;width:24.8px;height:24.8px;background:#434343;border-radius:50%;"></div>
<div style="position:absolute;left:1285.36px;top:299.90000000000003px;width:24.8px;height:24.8px;background:#666666;border-radius:50%;"></div>
<div style="position:absolute;left:1312.59px;top:299.90000000000003px;width:24.8px;height:24.8px;background:#999999;border-radius:50%;"></div>
<div style="position:absolute;left:1339.82px;top:299.90000000000003px;width:24.8px;height:24.8px;background:#b7b7b7;border-radius:50%;"></div>
<div style="position:absolute;left:1367.05px;top:299.90000000000003px;width:24.8px;height:24.8px;background:#cccccc;border-radius:50%;"></div>
<div style="position:absolute;left:1394.2799999999997px;top:299.90000000000003px;width:24.8px;height:24.8px;background:#d9d9d9;border-radius:50%;"></div>
<div style="position:absolute;left:1421.5099999999998px;top:299.90000000000003px;width:24.8px;height:24.8px;background:#efefef;border-radius:50%;box-shadow:inset 0 0 0 1px #dadce0;"></div>
<div style="position:absolute;left:1448.7399999999998px;top:299.90000000000003px;width:24.8px;height:24.8px;background:#f3f3f3;border-radius:50%;box-shadow:inset 0 0 0 1px #dadce0;"></div>
<div style="position:absolute;left:1475.9699999999998px;top:299.90000000000003px;width:24.8px;height:24.8px;background:#ffffff;border-radius:50%;box-shadow:inset 0 0 0 1px #dadce0;"></div>
<div style="position:absolute;left:1230.8999999999999px;top:326.90000000000003px;width:24.8px;height:24.8px;background:#980000;border-radius:50%;"></div>
<div style="position:absolute;left:1258.1299999999999px;top:326.90000000000003px;width:24.8px;height:24.8px;background:#ff0000;border-radius:50%;"></div>
<div style="position:absolute;left:1285.36px;top:326.90000000000003px;width:24.8px;height:24.8px;background:#ff9900;border-radius:50%;"></div>
<div style="position:absolute;left:1312.59px;top:326.90000000000003px;width:24.8px;height:24.8px;background:#ffff00;border-radius:50%;"></div>
<div style="position:absolute;left:1339.82px;top:326.90000000000003px;width:24.8px;height:24.8px;background:#00ff00;border-radius:50%;"></div>
<div style="position:absolute;left:1367.05px;top:326.90000000000003px;width:24.8px;height:24.8px;background:#00ffff;border-radius:50%;"></div>
<div style="position:absolute;left:1394.2799999999997px;top:326.90000000000003px;width:24.8px;height:24.8px;background:#4a86e8;border-radius:50%;"></div>
<div style="position:absolute;left:1421.5099999999998px;top:326.90000000000003px;width:24.8px;height:24.8px;background:#0000ff;border-radius:50%;"></div>
<div style="position:absolute;left:1448.7399999999998px;top:326.90000000000003px;width:24.8px;height:24.8px;background:#9900ff;border-radius:50%;"></div>
<div style="position:absolute;left:1475.9699999999998px;top:326.90000000000003px;width:24.8px;height:24.8px;background:#ff00ff;border-radius:50%;"></div>
<div style="position:absolute;left:1230.8999999999999px;top:353.90000000000003px;width:24.8px;height:24.8px;background:#e6b8af;border-radius:50%;"></div>
<div style="position:absolute;left:1258.1299999999999px;top:353.90000000000003px;width:24.8px;height:24.8px;background:#f4cccc;border-radius:50%;"></div>
<div style="position:absolute;left:1285.36px;top:353.90000000000003px;width:24.8px;height:24.8px;background:#fce5cd;border-radius:50%;box-shadow:inset 0 0 0 1px #dadce0;"></div>
<div style="position:absolute;left:1312.59px;top:353.90000000000003px;width:24.8px;height:24.8px;background:#fff2cc;border-radius:50%;box-shadow:inset 0 0 0 1px #dadce0;"></div>
<div style="position:absolute;left:1339.82px;top:353.90000000000003px;width:24.8px;height:24.8px;background:#d9ead3;border-radius:50%;"></div>
<div style="position:absolute;left:1367.05px;top:353.90000000000003px;width:24.8px;height:24.8px;background:#d0e0e3;border-radius:50%;"></div>
<div style="position:absolute;left:1394.2799999999997px;top:353.90000000000003px;width:24.8px;height:24.8px;background:#c9daf8;border-radius:50%;"></div>
<div style="position:absolute;left:1421.5099999999998px;top:353.90000000000003px;width:24.8px;height:24.8px;background:#cfe2f3;border-radius:50%;"></div>
<div style="position:absolute;left:1448.7399999999998px;top:353.90000000000003px;width:24.8px;height:24.8px;background:#d9d2e9;border-radius:50%;"></div>
<div style="position:absolute;left:1475.9699999999998px;top:353.90000000000003px;width:24.8px;height:24.8px;background:#ead1dc;border-radius:50%;"></div>
<div style="position:absolute;left:1230.8999999999999px;top:381.1px;width:24.8px;height:24.8px;background:#dd7e6b;border-radius:50%;"></div>
<div style="position:absolute;left:1258.1299999999999px;top:381.1px;width:24.8px;height:24.8px;background:#ea9999;border-radius:50%;"></div>
<div style="position:absolute;left:1285.36px;top:381.1px;width:24.8px;height:24.8px;background:#f9cb9c;border-radius:50%;"></div>
<div style="position:absolute;left:1312.59px;top:381.1px;width:24.8px;height:24.8px;background:#ffe599;border-radius:50%;"></div>
<div style="position:absolute;left:1339.82px;top:381.1px;width:24.8px;height:24.8px;background:#b6d7a8;border-radius:50%;"></div>
<div style="position:absolute;left:1367.05px;top:381.1px;width:24.8px;height:24.8px;background:#a2c4c9;border-radius:50%;"></div>
<div style="position:absolute;left:1394.2799999999997px;top:381.1px;width:24.8px;height:24.8px;background:#a4c2f4;border-radius:50%;"></div>
<div style="position:absolute;left:1421.5099999999998px;top:381.1px;width:24.8px;height:24.8px;background:#9fc5e8;border-radius:50%;"></div>
<div style="position:absolute;left:1448.7399999999998px;top:381.1px;width:24.8px;height:24.8px;background:#b4a7d6;border-radius:50%;"></div>
<div style="position:absolute;left:1475.9699999999998px;top:381.1px;width:24.8px;height:24.8px;background:#d5a6bd;border-radius:50%;"></div>
<div style="position:absolute;left:1230.8999999999999px;top:408.40000000000003px;width:24.8px;height:24.8px;background:#cc4125;border-radius:50%;"></div>
<div style="position:absolute;left:1258.1299999999999px;top:408.40000000000003px;width:24.8px;height:24.8px;background:#e06666;border-radius:50%;"></div>
<div style="position:absolute;left:1285.36px;top:408.40000000000003px;width:24.8px;height:24.8px;background:#f6b26b;border-radius:50%;"></div>
<div style="position:absolute;left:1312.59px;top:408.40000000000003px;width:24.8px;height:24.8px;background:#ffd966;border-radius:50%;"></div>
<div style="position:absolute;left:1339.82px;top:408.40000000000003px;width:24.8px;height:24.8px;background:#93c47d;border-radius:50%;"></div>
<div style="position:absolute;left:1367.05px;top:408.40000000000003px;width:24.8px;height:24.8px;background:#76a5af;border-radius:50%;"></div>
<div style="position:absolute;left:1394.2799999999997px;top:408.40000000000003px;width:24.8px;height:24.8px;background:#6d9eeb;border-radius:50%;"></div>
<div style="position:absolute;left:1421.5099999999998px;top:408.40000000000003px;width:24.8px;height:24.8px;background:#6fa8dc;border-radius:50%;"></div>
<div style="position:absolute;left:1448.7399999999998px;top:408.40000000000003px;width:24.8px;height:24.8px;background:#8e7cc3;border-radius:50%;"></div>
<div style="position:absolute;left:1475.9699999999998px;top:408.40000000000003px;width:24.8px;height:24.8px;background:#c27ba0;border-radius:50%;"></div>
<div style="position:absolute;left:1230.8999999999999px;top:435.6px;width:24.8px;height:24.8px;background:#a61c00;border-radius:50%;"></div>
<div style="position:absolute;left:1258.1299999999999px;top:435.6px;width:24.8px;height:24.8px;background:#cc0000;border-radius:50%;"></div>
<div style="position:absolute;left:1285.36px;top:435.6px;width:24.8px;height:24.8px;background:#e69138;border-radius:50%;"></div>
<div style="position:absolute;left:1312.59px;top:435.6px;width:24.8px;height:24.8px;background:#f1c232;border-radius:50%;"></div>
<div style="position:absolute;left:1339.82px;top:435.6px;width:24.8px;height:24.8px;background:#6aa84f;border-radius:50%;"></div>
<div style="position:absolute;left:1367.05px;top:435.6px;width:24.8px;height:24.8px;background:#45818e;border-radius:50%;"></div>
<div style="position:absolute;left:1394.2799999999997px;top:435.6px;width:24.8px;height:24.8px;background:#3c78d8;border-radius:50%;"></div>
<div style="position:absolute;left:1421.5099999999998px;top:435.6px;width:24.8px;height:24.8px;background:#3d85c6;border-radius:50%;"></div>
<div style="position:absolute;left:1448.7399999999998px;top:435.6px;width:24.8px;height:24.8px;background:#674ea7;border-radius:50%;"></div>
<div style="position:absolute;left:1475.9699999999998px;top:435.6px;width:24.8px;height:24.8px;background:#a64d79;border-radius:50%;"></div>
<div style="position:absolute;left:1230.8999999999999px;top:462.6px;width:24.8px;height:24.8px;background:#85200c;border-radius:50%;"></div>
<div style="position:absolute;left:1258.1299999999999px;top:462.6px;width:24.8px;height:24.8px;background:#990000;border-radius:50%;"></div>
<div style="position:absolute;left:1285.36px;top:462.6px;width:24.8px;height:24.8px;background:#b45f06;border-radius:50%;"></div>
<div style="position:absolute;left:1312.59px;top:462.6px;width:24.8px;height:24.8px;background:#bf9000;border-radius:50%;"></div>
<div style="position:absolute;left:1339.82px;top:462.6px;width:24.8px;height:24.8px;background:#38761d;border-radius:50%;"></div>
<div style="position:absolute;left:1367.05px;top:462.6px;width:24.8px;height:24.8px;background:#134f5c;border-radius:50%;"></div>
<div style="position:absolute;left:1394.2799999999997px;top:462.6px;width:24.8px;height:24.8px;background:#1155cc;border-radius:50%;"></div>
<div style="position:absolute;left:1421.5099999999998px;top:462.6px;width:24.8px;height:24.8px;background:#0b5394;border-radius:50%;"></div>
<div style="position:absolute;left:1448.7399999999998px;top:462.6px;width:24.8px;height:24.8px;background:#351c75;border-radius:50%;"></div>
<div style="position:absolute;left:1475.9699999999998px;top:462.6px;width:24.8px;height:24.8px;background:#741b47;border-radius:50%;"></div>
<div style="position:absolute;left:1230.8999999999999px;top:489.90000000000003px;width:24.8px;height:24.8px;background:#5b0f00;border-radius:50%;"></div>
<div style="position:absolute;left:1258.1299999999999px;top:489.90000000000003px;width:24.8px;height:24.8px;background:#660000;border-radius:50%;"></div>
<div style="position:absolute;left:1285.36px;top:489.90000000000003px;width:24.8px;height:24.8px;background:#783f04;border-radius:50%;"></div>
<div style="position:absolute;left:1312.59px;top:489.90000000000003px;width:24.8px;height:24.8px;background:#7f6000;border-radius:50%;"></div>
<div style="position:absolute;left:1339.82px;top:489.90000000000003px;width:24.8px;height:24.8px;background:#274e13;border-radius:50%;"></div>
<div style="position:absolute;left:1367.05px;top:489.90000000000003px;width:24.8px;height:24.8px;background:#0c343d;border-radius:50%;"></div>
<div style="position:absolute;left:1394.2799999999997px;top:489.90000000000003px;width:24.8px;height:24.8px;background:#1c4587;border-radius:50%;"></div>
<div style="position:absolute;left:1421.5099999999998px;top:489.90000000000003px;width:24.8px;height:24.8px;background:#073763;border-radius:50%;"></div>
<div style="position:absolute;left:1448.7399999999998px;top:489.90000000000003px;width:24.8px;height:24.8px;background:#20124d;border-radius:50%;"></div>
<div style="position:absolute;left:1475.9699999999998px;top:489.90000000000003px;width:24.8px;height:24.8px;background:#4c1130;border-radius:50%;"></div>
<svg style="position:absolute;left:1872px;top:91px" width="23" height="23" viewBox="0 0 23 23">
<rect x="0" y="0" width="23" height="23" rx="2.500" fill="#fff"/>
<path d="M2.500 0H18.400V4.600H4.600V18.400H0V2.500A2.500 2.500 0 0 1 2.500 0z" fill="#4285f4"/>
<path d="M18.400 0H20.500A2.500 2.500 0 0 1 23 2.500V4.600H18.400z" fill="#1967d2"/>
<path d="M18.400 4.600H23V18.400H18.400z" fill="#fbbc04"/>
<path d="M4.600 18.400H18.400V23H4.600z" fill="#34a853"/>
<path d="M0 18.400H4.600V23H2.500A2.500 2.500 0 0 1 0 20.500z" fill="#188038"/>
<path d="M18.400 18.400H23L18.400 23z" fill="#ea4335"/>
<path d="M23 18.400V23H18.400z" fill="#f9fbfd"/>
</svg>
<span style="position:absolute;left:1878.60px;top:96.50px;white-space:pre;font-family:'Liberation Sans',sans-serif;font-size:10.6px;font-weight:400;font-style:normal;color:#4285f4;letter-spacing:-1.892px;line-height:normal;-webkit-text-stroke:0.35px #4285f4;">31</span>
<svg style="position:absolute;left:1872px;top:160.700px" width="23.500" height="23.500" viewBox="0 0 23.500 23.500"><rect width="23.500" height="23.500" rx="2" fill="#fbbc04"/><circle cx="11.600" cy="10.700" r="5.200" fill="#fff"/><rect x="9.100" y="16.300" width="5" height="1.900" fill="#fff"/><rect x="9.600" y="14" width="4" height="2.400" fill="#fff"/></svg>
<svg style="position:absolute;left:1870px;top:228px" width="28" height="28" viewBox="0 0 28 28" fill="none"><circle cx="13.600" cy="14.400" r="8.600" stroke="#1a73e8" stroke-width="4"/><path d="M8.800 14.100 13.300 18.200 22.400 8.300" stroke="#1a73e8" stroke-width="3.600"/><path d="M21.800 4.400 25.100 7.700 21.300 11.500 18 8.200z" fill="#1258c9"/></svg>
<svg style="position:absolute;left:1870px;top:300px" width="28" height="24" viewBox="0 0 28 24"><path d="M5 22V17.500a5 5 0 0 1 5-5H17.400a5 5 0 0 1 5 5V22z" fill="#7baaf7"/><circle cx="13.700" cy="6" r="4.300" fill="#0b57d0"/><path d="M8.100 22V16.200a3.700 3.700 0 0 1 3.700-3.700H15.100a3.700 3.700 0 0 1 3.700 3.700V22z" fill="#0b57d0"/></svg>
<svg style="position:absolute;left:1875.700px;top:372px" width="16" height="21.500" viewBox="0 0 16 21.500"><path d="M8 0A8 8 0 0 0 0 8C0 13 8 21.500 8 21.500S16 13 16 8A8 8 0 0 0 8 0z" fill="#34a853"/><path d="M8 0A8 8 0 0 0 1.500 3.300L5.700 7.500 11 1.500A8 8 0 0 0 8 0z" fill="#1a73e8"/><path d="M1.500 3.300A8 8 0 0 0 0 8c0 1.500.6 3.200 1.500 4.900L5.700 7.500z" fill="#ea4335"/><path d="M1.500 12.900C2.500 14.800 3.800 16.600 5 18.100L12.500 9.500 10 6z" fill="#fbbc04"/><path d="M11 1.500 5.700 7.500 8 10 14.500 3.400A8 8 0 0 0 11 1.500z" fill="#4285f4"/><circle cx="8" cy="8" r="2.900" fill="#fff"/></svg>
<div style="position:absolute;left:1871px;top:438px;width:25px;height:1px;background:#dadce0"></div>
<div style="position:absolute;left:1875.2px;top:492.8px;width:17px;height:1.9px;background:#1f1f1f"></div>
<div style="position:absolute;left:1882.75px;top:485.3px;width:1.9px;height:17px;background:#1f1f1f"></div>
</body></html>
